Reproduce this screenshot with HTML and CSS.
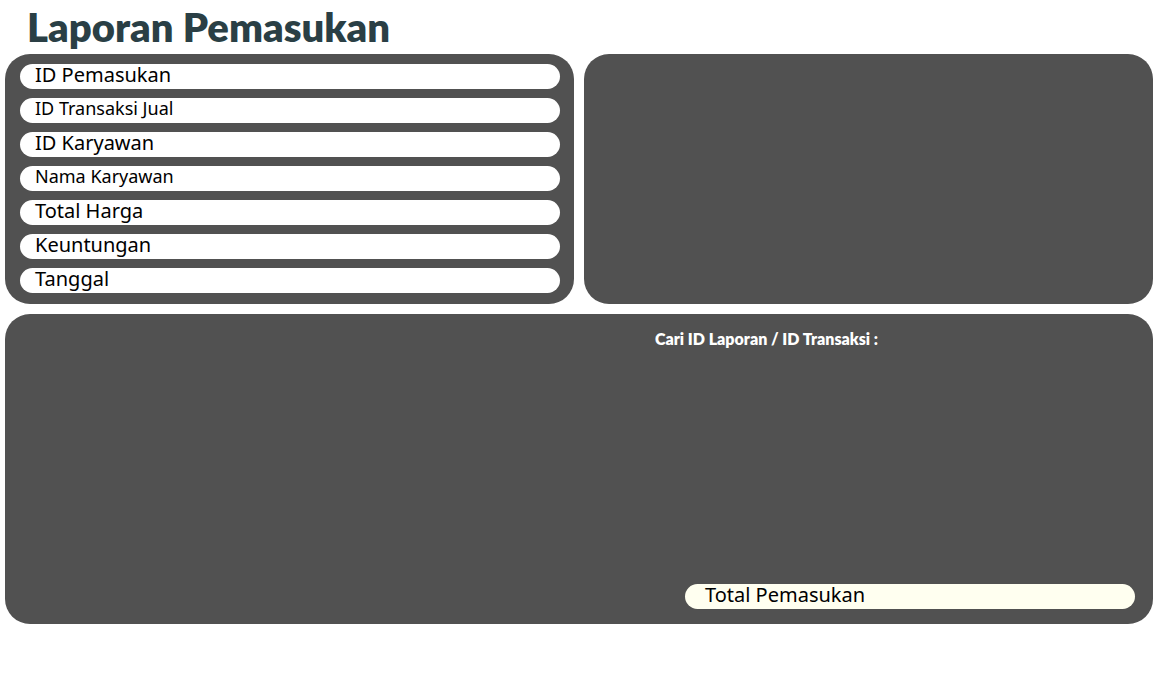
FILE: index.html
```html
<!DOCTYPE html>
<html lang="id">
<head>
<meta charset="utf-8">
<meta name="viewport" content="width=device-width, initial-scale=1">
<title>Laporan Pemasukan</title>
<link rel="stylesheet" href="styles.css">
</head>
<body>
<main class="page">
  <h1 class="title">Laporan Pemasukan</h1>
  <div class="top">
    <section class="panel details">
      <div class="field">ID Pemasukan</div>
      <div class="field small">ID Transaksi Jual</div>
      <div class="field">ID Karyawan</div>
      <div class="field small">Nama Karyawan</div>
      <div class="field">Total Harga</div>
      <div class="field">Keuntungan</div>
      <div class="field">Tanggal</div>
    </section>
    <section class="panel"></section>
  </div>
  <section class="panel report">
    <div class="report-side">
      <p class="search-label">Cari ID Laporan / ID Transaksi :</p>
      <div class="field total">Total Pemasukan</div>
    </div>
  </section>
</main>
</body>
</html>
```
FILE: styles.css
```css
* { box-sizing: border-box; }
body {
  margin: 0;
  background: #fff;
  color: #000;
  font-family: "Noto Sans", sans-serif;
}
.page { padding: 0 5px; }
.title {
  margin: 0;
  padding: 1px 22px;
  color: #2a3f45;
  font: 800 40px/52px Lato, sans-serif;
}
.top {
  display: grid;
  grid-template-columns: 1fr 1fr;
  gap: 10px;
  margin-bottom: 10px;
}
.panel {
  background: #515151;
  border-radius: 25px;
}
.details {
  display: flex;
  flex-direction: column;
  gap: 9px;
  padding: 10px 14px 11px 15px;
}
.field {
  height: 25px;
  padding: 0 15px;
  border-radius: 13px;
  background: #fff;
  font-size: 20px;
  line-height: 21px;
  white-space: nowrap;
}
.small { font-size: 18px; }
.report {
  display: flex;
  justify-content: flex-end;
  min-height: 310px;
  padding: 15px 18px;
}
.report-side {
  display: flex;
  flex-direction: column;
  justify-content: space-between;
  width: 480px;
}
.search-label {
  margin: 0;
  color: #fff;
  font: 800 16px/20px Lato, sans-serif;
}
.total {
  margin-left: 30px;
  padding: 0 20px;
  background: #fffff0;
}
```
